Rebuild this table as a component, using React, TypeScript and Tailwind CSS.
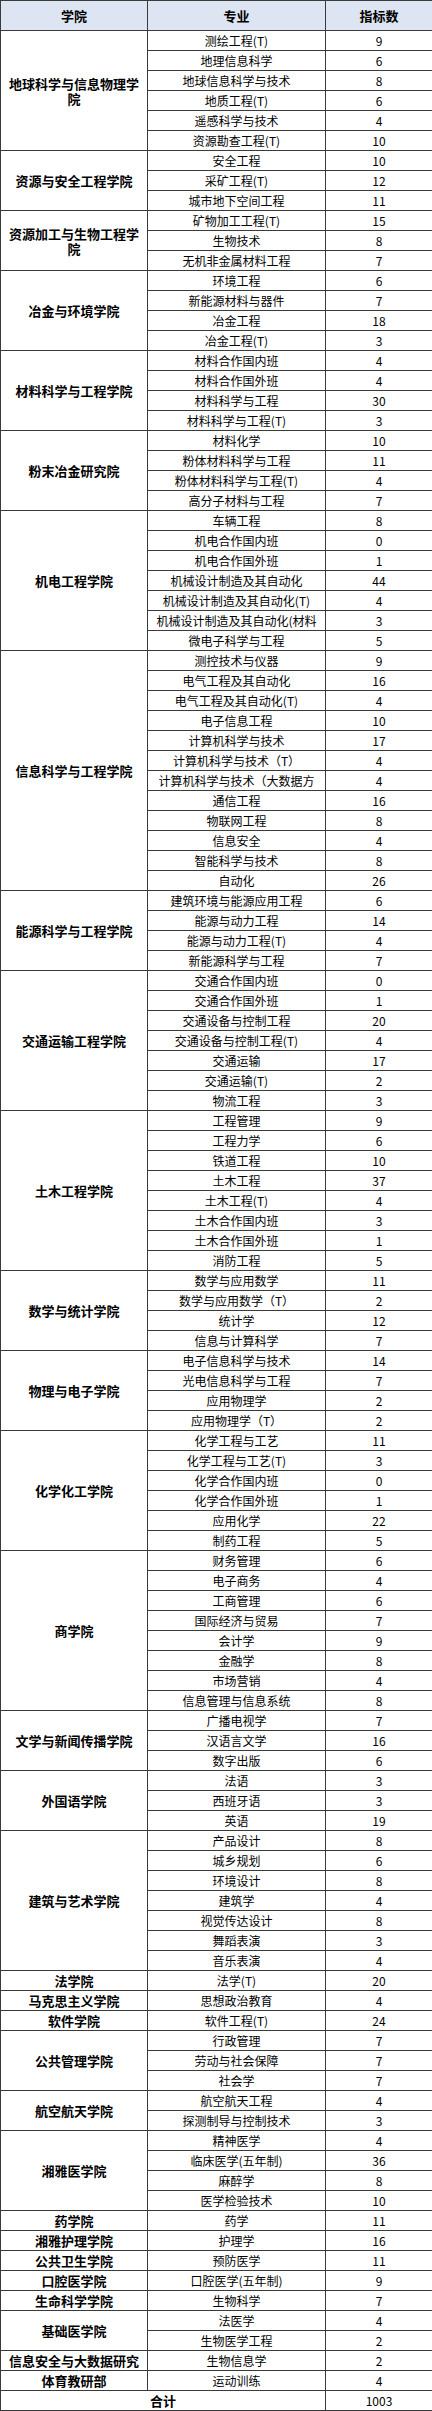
import React from "react";

type Group = { college: string; majors: [string, number][] };

const groups: Group[] = [
  {
    college: "地球科学与信息物理学院",
    majors: [
      ["测绘工程(T)", 9],
      ["地理信息科学", 6],
      ["地球信息科学与技术", 8],
      ["地质工程(T)", 6],
      ["遥感科学与技术", 4],
      ["资源勘查工程(T)", 10],
    ],
  },
  {
    college: "资源与安全工程学院",
    majors: [
      ["安全工程", 10],
      ["采矿工程(T)", 12],
      ["城市地下空间工程", 11],
    ],
  },
  {
    college: "资源加工与生物工程学院",
    majors: [
      ["矿物加工工程(T)", 15],
      ["生物技术", 8],
      ["无机非金属材料工程", 7],
    ],
  },
  {
    college: "冶金与环境学院",
    majors: [
      ["环境工程", 6],
      ["新能源材料与器件", 7],
      ["冶金工程", 18],
      ["冶金工程(T)", 3],
    ],
  },
  {
    college: "材料科学与工程学院",
    majors: [
      ["材料合作国内班", 4],
      ["材料合作国外班", 4],
      ["材料科学与工程", 30],
      ["材料科学与工程(T)", 3],
    ],
  },
  {
    college: "粉末冶金研究院",
    majors: [
      ["材料化学", 10],
      ["粉体材料科学与工程", 11],
      ["粉体材料科学与工程(T)", 4],
      ["高分子材料与工程", 7],
    ],
  },
  {
    college: "机电工程学院",
    majors: [
      ["车辆工程", 8],
      ["机电合作国内班", 0],
      ["机电合作国外班", 1],
      ["机械设计制造及其自动化", 44],
      ["机械设计制造及其自动化(T)", 4],
      ["机械设计制造及其自动化(材料类创新班)", 3],
      ["微电子科学与工程", 5],
    ],
  },
  {
    college: "信息科学与工程学院",
    majors: [
      ["测控技术与仪器", 9],
      ["电气工程及其自动化", 16],
      ["电气工程及其自动化(T)", 4],
      ["电子信息工程", 10],
      ["计算机科学与技术", 17],
      ["计算机科学与技术（T）", 4],
      ["计算机科学与技术（大数据方向）", 4],
      ["通信工程", 16],
      ["物联网工程", 8],
      ["信息安全", 4],
      ["智能科学与技术", 8],
      ["自动化", 26],
    ],
  },
  {
    college: "能源科学与工程学院",
    majors: [
      ["建筑环境与能源应用工程", 6],
      ["能源与动力工程", 14],
      ["能源与动力工程(T)", 4],
      ["新能源科学与工程", 7],
    ],
  },
  {
    college: "交通运输工程学院",
    majors: [
      ["交通合作国内班", 0],
      ["交通合作国外班", 1],
      ["交通设备与控制工程", 20],
      ["交通设备与控制工程(T)", 4],
      ["交通运输", 17],
      ["交通运输(T)", 2],
      ["物流工程", 3],
    ],
  },
  {
    college: "土木工程学院",
    majors: [
      ["工程管理", 9],
      ["工程力学", 6],
      ["铁道工程", 10],
      ["土木工程", 37],
      ["土木工程(T)", 4],
      ["土木合作国内班", 3],
      ["土木合作国外班", 1],
      ["消防工程", 5],
    ],
  },
  {
    college: "数学与统计学院",
    majors: [
      ["数学与应用数学", 11],
      ["数学与应用数学（T）", 2],
      ["统计学", 12],
      ["信息与计算科学", 7],
    ],
  },
  {
    college: "物理与电子学院",
    majors: [
      ["电子信息科学与技术", 14],
      ["光电信息科学与工程", 7],
      ["应用物理学", 2],
      ["应用物理学（T）", 2],
    ],
  },
  {
    college: "化学化工学院",
    majors: [
      ["化学工程与工艺", 11],
      ["化学工程与工艺(T)", 3],
      ["化学合作国内班", 0],
      ["化学合作国外班", 1],
      ["应用化学", 22],
      ["制药工程", 5],
    ],
  },
  {
    college: "商学院",
    majors: [
      ["财务管理", 6],
      ["电子商务", 4],
      ["工商管理", 6],
      ["国际经济与贸易", 7],
      ["会计学", 9],
      ["金融学", 8],
      ["市场营销", 4],
      ["信息管理与信息系统", 8],
    ],
  },
  {
    college: "文学与新闻传播学院",
    majors: [
      ["广播电视学", 7],
      ["汉语言文学", 16],
      ["数字出版", 6],
    ],
  },
  {
    college: "外国语学院",
    majors: [
      ["法语", 3],
      ["西班牙语", 3],
      ["英语", 19],
    ],
  },
  {
    college: "建筑与艺术学院",
    majors: [
      ["产品设计", 8],
      ["城乡规划", 6],
      ["环境设计", 8],
      ["建筑学", 4],
      ["视觉传达设计", 8],
      ["舞蹈表演", 3],
      ["音乐表演", 4],
    ],
  },
  { college: "法学院", majors: [["法学(T)", 20]] },
  { college: "马克思主义学院", majors: [["思想政治教育", 4]] },
  { college: "软件学院", majors: [["软件工程(T)", 24]] },
  {
    college: "公共管理学院",
    majors: [
      ["行政管理", 7],
      ["劳动与社会保障", 7],
      ["社会学", 7],
    ],
  },
  {
    college: "航空航天学院",
    majors: [
      ["航空航天工程", 4],
      ["探测制导与控制技术", 3],
    ],
  },
  {
    college: "湘雅医学院",
    majors: [
      ["精神医学", 4],
      ["临床医学(五年制)", 36],
      ["麻醉学", 8],
      ["医学检验技术", 10],
    ],
  },
  { college: "药学院", majors: [["药学", 11]] },
  { college: "湘雅护理学院", majors: [["护理学", 16]] },
  { college: "公共卫生学院", majors: [["预防医学", 11]] },
  { college: "口腔医学院", majors: [["口腔医学(五年制)", 9]] },
  { college: "生命科学学院", majors: [["生物科学", 7]] },
  {
    college: "基础医学院",
    majors: [
      ["法医学", 4],
      ["生物医学工程", 2],
    ],
  },
  { college: "信息安全与大数据研究院", majors: [["生物信息学", 2]] },
  { college: "体育教研部", majors: [["运动训练", 4]] },
];

const total = groups.reduce(
  (s, g) => s + g.majors.reduce((a, m) => a + m[1], 0),
  0
);

export default function App() {
  return (
    <div className="w-[432px] bg-white text-black font-['Noto_Sans_CJK_SC','Noto_Sans',sans-serif]">
      <table className="w-[432px] table-fixed border-collapse">
        <colgroup>
          <col className="w-[147px]" />
          <col className="w-[178px]" />
          <col className="w-[107px]" />
        </colgroup>
        <thead>
          <tr className="h-[30px] bg-[#dce5f1]">
            <th className="border border-[#3a3a3a] p-0 text-center align-middle text-[13px] font-bold leading-[29px]">
              学院
            </th>
            <th className="border border-[#3a3a3a] p-0 text-center align-middle text-[13px] font-bold leading-[29px]">
              专业
            </th>
            <th className="border border-[#3a3a3a] p-0 text-center align-middle text-[13px] font-bold leading-[29px]">
              指标数
            </th>
          </tr>
        </thead>
        <tbody>
          {groups.map((g) =>
            g.majors.map((m, i) => (
              <tr key={g.college + m[0]} className="h-[20px]">
                {i === 0 && (
                  <td
                    rowSpan={g.majors.length}
                    className="border border-[#3a3a3a] p-0 px-[4px] text-center align-middle text-[13px] font-bold leading-[15px]"
                  >
                    {g.majors.length === 1 ? (
                      <div className="h-[19px] overflow-hidden leading-[19px]">
                        {g.college}
                      </div>
                    ) : (
                      g.college
                    )}
                  </td>
                )}
                <td className="border border-[#3a3a3a] p-0 px-[6px] text-center align-middle text-[12px]">
                  <div className="h-[19px] overflow-hidden leading-[19px]">
                    {m[0]}
                  </div>
                </td>
                <td className="border border-[#3a3a3a] p-0 text-center align-middle text-[12px]">
                  <div className="h-[19px] overflow-hidden leading-[19px]">
                    {m[1]}
                  </div>
                </td>
              </tr>
            ))
          )}
          <tr className="h-[20px]">
            <td
              colSpan={2}
              className="border border-[#3a3a3a] p-0 text-center align-middle text-[13px] font-bold"
            >
              <div className="h-[19px] overflow-hidden leading-[19px]">合计</div>
            </td>
            <td className="border border-[#3a3a3a] p-0 text-center align-middle text-[12px]">
              <div className="h-[19px] overflow-hidden leading-[19px]">{total}</div>
            </td>
          </tr>
        </tbody>
      </table>
    </div>
  );
}
